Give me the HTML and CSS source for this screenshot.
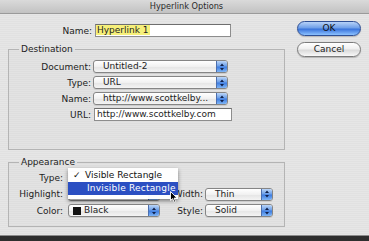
FILE: index.html
```html
<!DOCTYPE html>
<html>
<head>
<meta charset="utf-8">
<link rel="stylesheet" href="styles.css">
</head>
<body>
<div class="window">
  <div class="titlebar">Hyperlink Options</div>
  <div class="content">
    <div class="main">
      <div class="name-row">
        <span class="label">Name:</span>
        <div class="textfield name-field"><span class="selected-text">Hyperlink 1</span></div>
      </div>

      <fieldset class="group dest">
        <legend>Destination</legend>
        <div class="dest-grid">
          <span class="label">Document:</span>
          <div class="popup"><span class="ptext">Untitled-2</span><span class="stepper"><svg width="4" height="8" viewBox="0 0 4 8"><path d="M0 3 L2 0.5 L4 3 Z M0 5 L2 7.5 L4 5 Z" fill="#10204a"/></svg></span></div>
          <span class="label">Type:</span>
          <div class="popup"><span class="ptext">URL</span><span class="stepper"><svg width="4" height="8" viewBox="0 0 4 8"><path d="M0 3 L2 0.5 L4 3 Z M0 5 L2 7.5 L4 5 Z" fill="#10204a"/></svg></span></div>
          <span class="label">Name:</span>
          <div class="popup"><span class="ptext">http://www.scottkelby...</span><span class="stepper"><svg width="4" height="8" viewBox="0 0 4 8"><path d="M0 3 L2 0.5 L4 3 Z M0 5 L2 7.5 L4 5 Z" fill="#10204a"/></svg></span></div>
          <span class="label">URL:</span>
          <div class="textfield url-field">http://www.scottkelby.com</div>
        </div>
      </fieldset>

      <fieldset class="group appear">
        <legend>Appearance</legend>
        <div class="app-grid">
          <span class="label">Type:</span>
          <div class="popup"><span class="ptext"></span><span class="stepper"></span></div>
          <span></span><span></span>

          <span class="label">Highlight:</span>
          <div class="popup"><span class="ptext"></span><span class="stepper"></span></div>
          <span class="label label2">Width:</span>
          <div class="popup"><span class="ptext">Thin</span><span class="stepper"><svg width="4" height="8" viewBox="0 0 4 8"><path d="M0 3 L2 0.5 L4 3 Z M0 5 L2 7.5 L4 5 Z" fill="#10204a"/></svg></span></div>

          <span class="label">Color:</span>
          <div class="popup color-popup"><span class="swatch"></span><span class="ptext">Black</span><span class="stepper"><svg width="4" height="8" viewBox="0 0 4 8"><path d="M0 3 L2 0.5 L4 3 Z M0 5 L2 7.5 L4 5 Z" fill="#10204a"/></svg></span></div>
          <span class="label label2">Style:</span>
          <div class="popup"><span class="ptext">Solid</span><span class="stepper"><svg width="4" height="8" viewBox="0 0 4 8"><path d="M0 3 L2 0.5 L4 3 Z M0 5 L2 7.5 L4 5 Z" fill="#10204a"/></svg></span></div>

          <div class="menu">
            <div class="menu-item"><span class="check">✓</span>Visible Rectangle</div>
            <div class="menu-item active">Invisible Rectangle</div>
            <svg class="cursor" width="8" height="12" viewBox="0 0 8 12"><path d="M0.5 0.5 L0.5 9.5 L2.6 7.6 L4.2 11.2 L5.6 10.6 L4.1 7.1 L7 7.1 Z" fill="#000" stroke="#fff" stroke-width="0.9"/></svg>
          </div>
        </div>
      </fieldset>
    </div>

    <div class="buttons">
      <div class="btn btn-default">OK</div>
      <div class="btn">Cancel</div>
    </div>
  </div>
</div>
</body>
</html>
```

FILE: styles.css
```css
html, body {
  margin: 0;
  padding: 0;
}
body {
  width: 369px;
  height: 241px;
  overflow: hidden;
  background: linear-gradient(#4a4a4a, #2e2e2e);
  font-family: "DejaVu Sans", "Liberation Sans", sans-serif;
  font-size: 9px;
  color: #1e1e1e;
}
.window {
  height: 236px;
  background: repeating-linear-gradient(#e6e6e6 0 1px, #e1e1e1 1px 2px);
  border-bottom: 1px solid #8c8c8c;
  box-sizing: border-box;
}
.titlebar {
  height: 14px;
  box-sizing: border-box;
  border-bottom: 1px solid #9a9a9a;
  background: linear-gradient(#dadada, #c2c2c2);
  text-align: center;
  font-size: 8.2px;
  line-height: 13px;
  color: #2a2a2a;
  padding-left: 4px;
}
.content {
  display: flex;
  padding: 7px 8px 0 8px;
  gap: 12px;
}
.main {
  width: 277px;
  display: flex;
  flex-direction: column;
}
.label {
  text-align: right;
  white-space: nowrap;
  color: #222;
}
.name-row {
  display: flex;
  align-items: center;
  margin-top: 3px;
  height: 13px;
}
.name-row .label {
  width: 84px;
}
.textfield {
  background: #fff;
  border: 1px solid #8d8d8d;
  border-top-color: #6e6e6e;
  box-sizing: border-box;
  height: 13px;
  line-height: 11px;
  white-space: nowrap;
  overflow: hidden;
}
.name-field {
  margin-left: 3px;
  width: 136px;
  padding-left: 0;
}
.selected-text {
  background: #f6f07a;
  padding: 0 1px;
}
.group {
  margin: 0;
  padding: 0;
  border: 1px solid #b4b4b4;
  min-width: 0;
  background: rgba(0,0,0,0.012);
}
.group legend {
  margin-left: 10px;
  padding: 0 2px;
  line-height: 11px;
  height: 11px;
  color: #222;
}
.dest {
  margin-top: 7px;
  height: 106px;
  box-sizing: border-box;
}
.dest-grid {
  display: grid;
  grid-template-columns: 84px 135px;
  grid-auto-rows: 13px;
  row-gap: 3px;
  align-items: center;
  padding-top: 5px;
}
.dest-grid .label {
  padding-right: 2px;
}
.url-field {
  width: 138px;
  margin-left: 1px;
  padding-left: 2px;
}
.popup {
  height: 13px;
  box-sizing: border-box;
  border: 1px solid #858585;
  border-radius: 3px;
  background: linear-gradient(#ffffff, #f1f1f1 50%, #e4e4e4 51%, #f4f4f4);
  display: flex;
  align-items: center;
  overflow: hidden;
  box-shadow: 0 1px 0 rgba(0,0,0,0.08);
}
.ptext {
  padding-left: 9px;
  white-space: nowrap;
  line-height: 11px;
  flex: 1;
  overflow: hidden;
}
.stepper {
  width: 10px;
  height: 100%;
  flex: none;
  display: flex;
  align-items: center;
  justify-content: center;
  background: linear-gradient(#bcd6f8, #6c9fe8 45%, #3f7de0 55%, #7fb6f6);
  border-left: 1px solid #4c6fae;
}
.appear {
  margin-top: 7px;
  height: 70px;
  box-sizing: border-box;
}
.app-grid {
  position: relative;
  display: grid;
  grid-template-columns: 59px 92px 45px 68px;
  grid-auto-rows: 13px;
  row-gap: 3.5px;
  align-items: center;
  padding-top: 3px;
}
.app-grid .label {
  padding-right: 5px;
}
.app-grid .label2 {
  padding-right: 2px;
}
.color-popup .ptext {
  padding-left: 3px;
}
.swatch {
  width: 8px;
  height: 8px;
  background: #111;
  margin-left: 4px;
  flex: none;
}
.menu {
  position: absolute;
  left: 59px;
  top: 0px;
  width: 110px;
  padding: 1px 0 4px;
  background: rgba(255,255,255,0.97);
  box-shadow: 0 2px 4px rgba(0,0,0,0.45);
}
.menu-item {
  height: 13px;
  line-height: 13px;
  padding-left: 17px;
  position: relative;
  white-space: nowrap;
  color: #111;
}
.menu-item .check {
  position: absolute;
  left: 5px;
}
.menu-item.active {
  background: #2b4fc2;
  color: #fff;
  padding-left: 19px;
  letter-spacing: 0.2px;
}
.cursor {
  position: absolute;
  left: 102px;
  top: 23px;
}
.buttons {
  display: flex;
  flex-direction: column;
  gap: 6px;
  width: 64px;
}
.btn {
  height: 15px;
  box-sizing: border-box;
  border-radius: 8px;
  border: 1px solid #7b7b7b;
  background: linear-gradient(#ffffff, #f0f0f0 45%, #dadada 55%, #f8f8f8);
  text-align: center;
  line-height: 13px;
  color: #222;
  box-shadow: 0 1px 1px rgba(0,0,0,0.2);
}
.btn-default {
  border-color: #2e4f95;
  background: linear-gradient(#b7d2f8, #6f9fe8 45%, #3a74dc 55%, #8cc2ff);
  color: #111;
}
```
